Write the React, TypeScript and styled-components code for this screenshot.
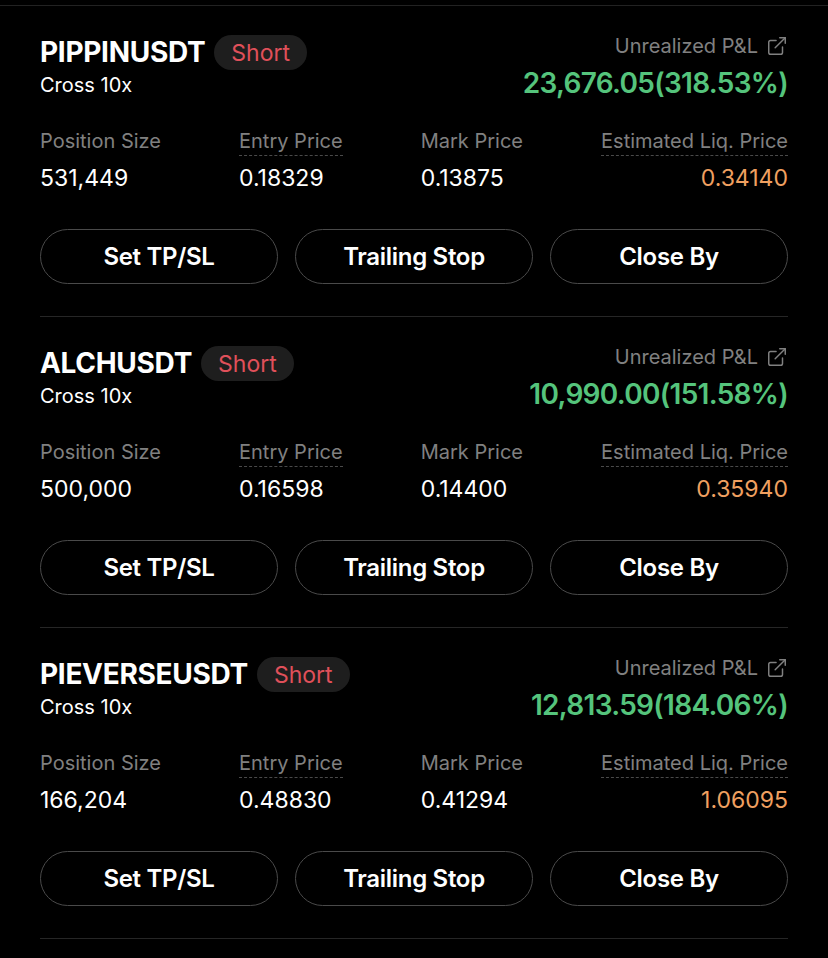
import styled, { createGlobalStyle } from 'styled-components'
import { ExternalLink } from 'lucide-react'

const GlobalStyle = createGlobalStyle`
  html, body {
    margin: 0;
    padding: 0;
    background: #000;
  }
  body {
    font-family: Inter, "Noto Sans", "Liberation Sans", sans-serif;
    color: #fff;
  }
`

const Page = styled.div`
  width: 828px;
  min-height: 958px;
  background: #000;
  padding-top: 5px;
  box-sizing: border-box;
`

const TopDivider = styled.div`
  height: 1px;
  background: #222;
`

const List = styled.ul`
  list-style: none;
  margin: 0;
  padding: 0 40px;
`

const Card = styled.li`
  padding: 26px 0 32px;
  border-bottom: 1px solid #262626;
`

const Header = styled.div`
  display: flex;
  justify-content: space-between;
  align-items: flex-start;
`

const HeaderLeft = styled.div`
  display: flex;
  flex-direction: column;
  padding-top: 3px;
`

const TitleRow = styled.div`
  display: flex;
  align-items: center;
  gap: 9px;
`

const Symbol = styled.h3`
  margin: 0;
  font-size: 28px;
  line-height: 35px;
  font-weight: 700;
  letter-spacing: -0.3px;
`

const SideBadge = styled.span`
  display: inline-flex;
  align-items: center;
  height: 35px;
  padding: 0 17px;
  border-radius: 18px;
  background: #1e1e1e;
  color: #e0505a;
  font-size: 23px;
  font-weight: 400;
`

const Margin = styled.div`
  margin-top: 3px;
  font-size: 20px;
  line-height: 24px;
`

const HeaderRight = styled.div`
  display: flex;
  flex-direction: column;
  align-items: flex-end;
  padding-top: 2px;
`

const PnlLabel = styled.div`
  display: flex;
  align-items: center;
  gap: 8px;
  color: #808080;
  font-size: 20px;
  line-height: 24px;
`

const PnlValue = styled.div`
  margin-top: 8px;
  color: #55c47c;
  font-size: 28px;
  line-height: 34px;
  font-weight: 600;
  letter-spacing: -0.7px;
`

const Stats = styled.div`
  display: flex;
  justify-content: space-between;
  margin-top: 29px;
`

const Stat = styled.div<{ $right?: boolean }>`
  display: flex;
  flex-direction: column;
  align-items: ${p => (p.$right ? 'flex-end' : 'flex-start')};
`

const StatLabel = styled.span<{ $dotted?: boolean }>`
  color: #808080;
  font-size: 20px;
  line-height: 24px;
  padding-bottom: 2px;
  border-bottom: 1px dashed ${p => (p.$dotted ? '#4a4a4a' : 'transparent')};
`

const StatValue = styled.span<{ $color?: string }>`
  margin-top: 8px;
  color: ${p => p.$color || '#fff'};
  font-size: 23px;
  line-height: 28px;
`

const Actions = styled.div`
  display: flex;
  gap: 17px;
  margin-top: 37px;
`

const ActionButton = styled.button`
  flex: 1;
  height: 55px;
  border: 1.5px solid #4a4a4a;
  border-radius: 28px;
  background: transparent;
  color: #fff;
  font-family: inherit;
  font-size: 24px;
  font-weight: 600;
  letter-spacing: -0.3px;
  cursor: pointer;
`

type Position = {
  symbol: string
  size: string
  entry: string
  mark: string
  liq: string
  pnl: string
}

const positions: Position[] = [
  { symbol: 'PIPPINUSDT', size: '531,449', entry: '0.18329', mark: '0.13875', liq: '0.34140', pnl: '23,676.05(318.53%)' },
  { symbol: 'ALCHUSDT', size: '500,000', entry: '0.16598', mark: '0.14400', liq: '0.35940', pnl: '10,990.00(151.58%)' },
  { symbol: 'PIEVERSEUSDT', size: '166,204', entry: '0.48830', mark: '0.41294', liq: '1.06095', pnl: '12,813.59(184.06%)' },
]

const App: React.FC = () => {
  return (
    <Page>
      <GlobalStyle />
      <TopDivider />
      <List>
        {positions.map(p => (
          <Card key={p.symbol}>
            <Header>
              <HeaderLeft>
                <TitleRow>
                  <Symbol>{p.symbol}</Symbol>
                  <SideBadge>Short</SideBadge>
                </TitleRow>
                <Margin>Cross 10x</Margin>
              </HeaderLeft>
              <HeaderRight>
                <PnlLabel>
                  Unrealized P&amp;L
                  <ExternalLink size={22} strokeWidth={1.6} color="#808080" />
                </PnlLabel>
                <PnlValue>{p.pnl}</PnlValue>
              </HeaderRight>
            </Header>
            <Stats>
              <Stat>
                <StatLabel>Position Size</StatLabel>
                <StatValue>{p.size}</StatValue>
              </Stat>
              <Stat>
                <StatLabel $dotted>Entry Price</StatLabel>
                <StatValue>{p.entry}</StatValue>
              </Stat>
              <Stat>
                <StatLabel>Mark Price</StatLabel>
                <StatValue>{p.mark}</StatValue>
              </Stat>
              <Stat $right>
                <StatLabel $dotted>Estimated Liq. Price</StatLabel>
                <StatValue $color="#f0a060">{p.liq}</StatValue>
              </Stat>
            </Stats>
            <Actions>
              <ActionButton>Set TP/SL</ActionButton>
              <ActionButton>Trailing Stop</ActionButton>
              <ActionButton>Close By</ActionButton>
            </Actions>
          </Card>
        ))}
      </List>
    </Page>
  )
}

export default App
